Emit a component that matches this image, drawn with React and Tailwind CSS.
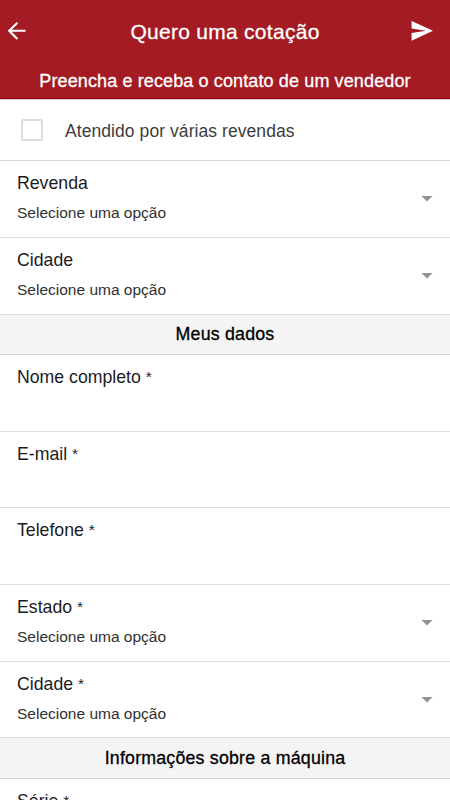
import React, { useState } from 'react';

const BackIcon = () => (
  <svg width="20" height="20" viewBox="0 0 20 20" fill="none" stroke="white" strokeWidth="2.1">
    <path d="M19.6 9.8H3M11.4 1.8L3.2 9.8L11.4 18" />
  </svg>
);

const SendIcon = () => (
  <svg width="22" height="20" viewBox="0 0 22 20" fill="white">
    <path d="M0.6 0L22 9.8L0.6 19.7V12L15 9.8L0.6 7.6Z" />
  </svg>
);

const FieldLabel = ({ label, required }) => (
  <span className="text-[17.7px] leading-6 text-[#1c1c1c]">
    {label}
    {required && <> <span className="relative -top-px text-[15.5px] leading-none">*</span></>}
  </span>
);

const SelectRow = ({ label, required, height = 'h-[77px]' }) => (
  <button className={`flex w-full shrink-0 items-center justify-between border-b border-[#dedede] px-[17px] text-left ${height}`}>
    <span className="flex h-full flex-col pt-[10px]">
      <FieldLabel label={label} required={required} />
      <span className="mt-[7px] text-[15.5px] leading-[22px] text-[#303030]">Selecione uma opção</span>
    </span>
    <svg width="12" height="6" viewBox="0 0 12 6" fill="#929292"><path d="M0.5 0H11.5L6 5.5Z" /></svg>
  </button>
);

const InputRow = ({ label, required, height = 'h-[77px]' }) => (
  <label className={`flex w-full shrink-0 flex-col border-b border-[#dedede] px-[17px] pt-[10px] ${height}`}>
    <FieldLabel label={label} required={required} />
    <input className="w-full bg-transparent text-[15.5px] outline-none" />
  </label>
);

const SectionTitle = ({ children, height = 'h-10' }) => (
  <h2 className={`flex shrink-0 items-center justify-center border-b border-[#d4d4d4] bg-[#f4f4f4] text-[17.8px] tracking-[0.2px] text-black [-webkit-text-stroke:0.3px_black] ${height}`}>
    {children}
  </h2>
);

export default function App() {
  const [multiple, setMultiple] = useState(false);

  return (
    <div className="flex h-[800px] w-[450px] flex-col overflow-hidden bg-white font-['Liberation_Sans',Arial,sans-serif]">
      <header className="flex h-[100px] shrink-0 flex-col border-b border-[#dcd2d3] bg-[#a41b24] text-white">
        <div className="grid h-[62px] grid-cols-[40px_1fr_40px] items-center pl-[6px] pr-[17px]">
          <button><BackIcon /></button>
          <h1 className="pl-[11px] pt-px text-center text-[21px] tracking-[0.28px] [-webkit-text-stroke:0.3px_white]">Quero uma cotação</h1>
          <button className="justify-self-end"><SendIcon /></button>
        </div>
        <p className="flex grow items-center justify-center border-b border-[#980006] pt-[3px] text-[18px] tracking-[0.12px] [-webkit-text-stroke:0.3px_white]">
          Preencha e receba o contato de um vendedor
        </p>
      </header>

      <label className="flex h-[61px] shrink-0 items-center border-b border-[#d6d6d6] pl-[21px]">
        <input
          type="checkbox"
          checked={multiple}
          onChange={(e) => setMultiple(e.target.checked)}
          className="h-[22px] w-[22px] appearance-none rounded-[2px] border-2 border-[#dcdcdc] checked:bg-[#a41b24]"
        />
        <span className="ml-[22px] pt-[2px] text-[17.5px] tracking-[0.07px] text-[#3c3c3c]">Atendido por várias revendas</span>
      </label>

      <SelectRow label="Revenda" />
      <SelectRow label="Cidade" />

      <SectionTitle>Meus dados</SectionTitle>
      <InputRow label="Nome completo" required />
      <InputRow label="E-mail" required height="h-[76px]" />
      <InputRow label="Telefone" required />
      <SelectRow label="Estado" required />
      <SelectRow label="Cidade" required height="h-[76px]" />

      <SectionTitle height="h-[41px]">Informações sobre a máquina</SectionTitle>
      <InputRow label="Série" required />
    </div>
  );
}
